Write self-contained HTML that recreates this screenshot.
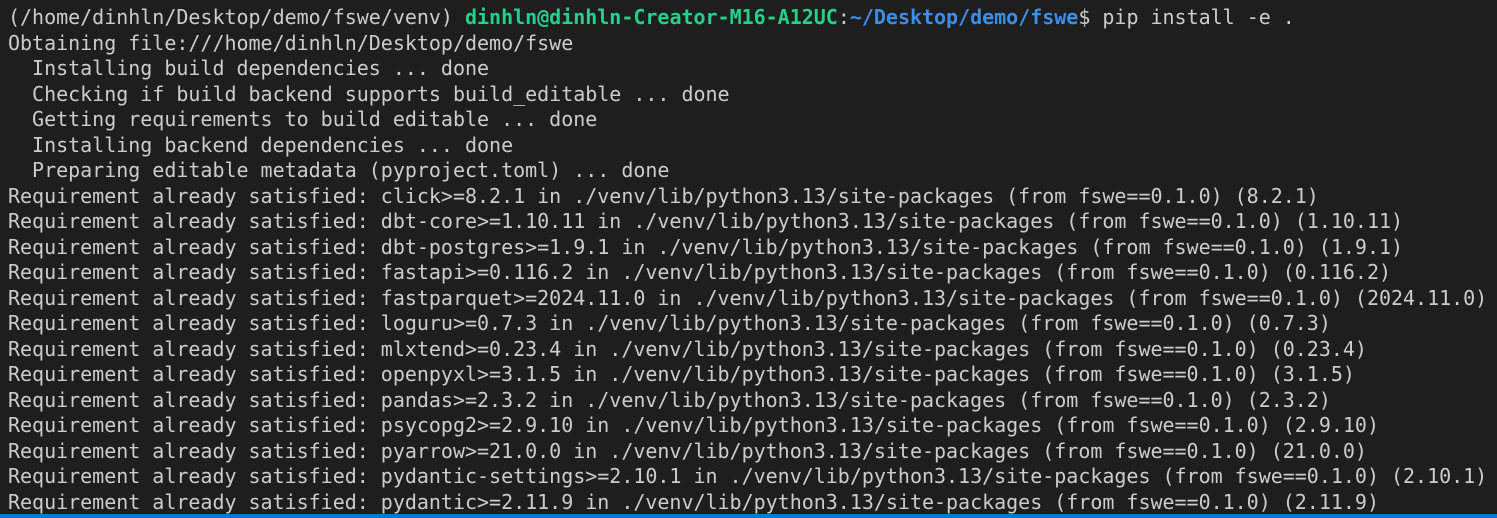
<!DOCTYPE html>
<html><head><meta charset="utf-8"><style>
html,body{margin:0;padding:0;background:#1e1e1e;width:1497px;height:518px;overflow:hidden}
pre{position:absolute;left:8px;top:5px;margin:0;font-family:"DejaVu Sans Mono","Liberation Mono",monospace;font-size:20px;line-height:25.5px;color:#cccccc;white-space:pre;letter-spacing:-0.015px}
.g{color:#23d18b;font-weight:bold}.b{color:#3b8eea;font-weight:bold}
.bar{position:absolute;left:0;bottom:0;width:1497px;height:4px;background:#007acc}
</style></head><body>
<pre>(/home/dinhln/Desktop/demo/fswe/venv) <span class="g">dinhln@dinhln-Creator-M16-A12UC</span>:<span class="b">~/Desktop/demo/fswe</span>$ pip install -e .
Obtaining file:///home/dinhln/Desktop/demo/fswe
  Installing build dependencies ... done
  Checking if build backend supports build_editable ... done
  Getting requirements to build editable ... done
  Installing backend dependencies ... done
  Preparing editable metadata (pyproject.toml) ... done
Requirement already satisfied: click>=8.2.1 in ./venv/lib/python3.13/site-packages (from fswe==0.1.0) (8.2.1)
Requirement already satisfied: dbt-core>=1.10.11 in ./venv/lib/python3.13/site-packages (from fswe==0.1.0) (1.10.11)
Requirement already satisfied: dbt-postgres>=1.9.1 in ./venv/lib/python3.13/site-packages (from fswe==0.1.0) (1.9.1)
Requirement already satisfied: fastapi>=0.116.2 in ./venv/lib/python3.13/site-packages (from fswe==0.1.0) (0.116.2)
Requirement already satisfied: fastparquet>=2024.11.0 in ./venv/lib/python3.13/site-packages (from fswe==0.1.0) (2024.11.0)
Requirement already satisfied: loguru>=0.7.3 in ./venv/lib/python3.13/site-packages (from fswe==0.1.0) (0.7.3)
Requirement already satisfied: mlxtend>=0.23.4 in ./venv/lib/python3.13/site-packages (from fswe==0.1.0) (0.23.4)
Requirement already satisfied: openpyxl>=3.1.5 in ./venv/lib/python3.13/site-packages (from fswe==0.1.0) (3.1.5)
Requirement already satisfied: pandas>=2.3.2 in ./venv/lib/python3.13/site-packages (from fswe==0.1.0) (2.3.2)
Requirement already satisfied: psycopg2>=2.9.10 in ./venv/lib/python3.13/site-packages (from fswe==0.1.0) (2.9.10)
Requirement already satisfied: pyarrow>=21.0.0 in ./venv/lib/python3.13/site-packages (from fswe==0.1.0) (21.0.0)
Requirement already satisfied: pydantic-settings>=2.10.1 in ./venv/lib/python3.13/site-packages (from fswe==0.1.0) (2.10.1)
Requirement already satisfied: pydantic>=2.11.9 in ./venv/lib/python3.13/site-packages (from fswe==0.1.0) (2.11.9)</pre>
<div class="bar"></div>
</body></html>
